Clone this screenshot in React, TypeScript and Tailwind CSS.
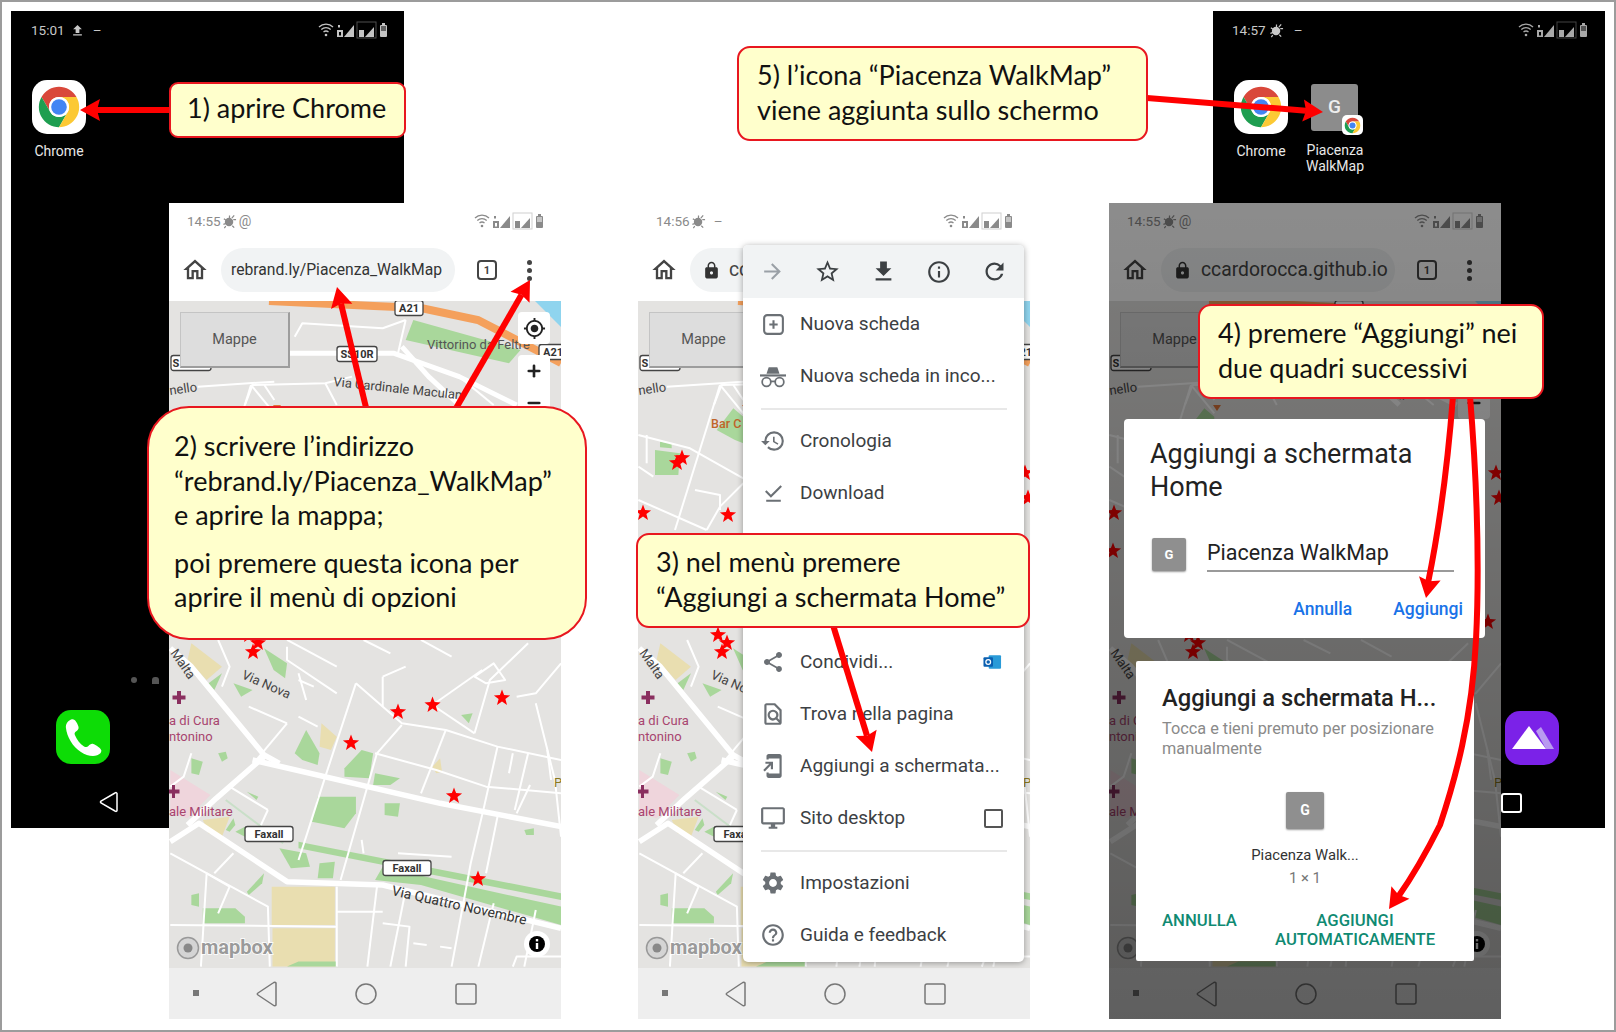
import React from "react";
import {
  MdOutlineHome, MdArrowForward, MdStarBorder, MdFileDownload, MdInfoOutline, MdRefresh,
  MdHistory, MdShare, MdOutlineFindInPage, MdOutlineAddToHomeScreen, MdOutlineDesktopWindows,
  MdSettings, MdHelpOutline, MdDownloadDone, MdLock, MdGpsFixed, MdFileUpload,
} from "react-icons/md";
import { Plus, Minus } from "lucide-react";

const Z1 = "translate(-169,-301) scale(.3827,.3333)";
const Z2 = "translate(-169,219) scale(.3827,.3333)";
const Z3 = "translate(-18,-101) scale(.3333)";

const GREEN = "#a9d79b";
const TAN = "#e9deb0";

const z2Green = [
  "770,700 800,630 835,700 830,735 790,720",
  "830,830 930,830 930,880 900,925 815,905",
  "900,745 945,690 975,700 965,775 900,770",
  "980,760 1045,775 1020,795 975,795",
  "1005,850 1045,850 1040,890 1005,885",
  "690,385 750,430 745,475 715,450",
  "610,490 660,510 630,530",
  "545,490 580,460 560,510",
  "500,715 530,725 520,765 500,760",
  "1205,585 1235,580 1225,610",
  "1370,930 1395,925 1395,945 1375,945",
  "835,1030 875,1025 870,1075 830,1075",
  "530,1165 615,1165 640,1190 640,1210 530,1210",
  "500,1125 520,1120 520,1160 500,1155",
  "730,985 800,1000 810,1040 760,1045",
  "780,965 1466,1120 1466,1140 780,985",
  "1000,1040 1130,1075 1466,1160 1466,1215 1100,1095 980,1080",
  "590,930 610,895 615,915 600,935",
  "615,935 640,920 640,950",
  "645,1115 690,1060 685,1090 650,1125",
  "570,700 590,695 595,715 580,725",
  "645,815 675,830 670,840",
  "750,1340 880,1340 880,1325 780,1325",
];
const z2Tan = [
  "710,1100 875,1100 875,1215 710,1215",
  "712,1225 875,1225 875,1340 712,1340",
  "500,370 580,440 540,480 490,420",
  "840,610 880,650 865,690 835,680",
  "530,900 600,890 580,950 545,940",
  "1130,740 1150,715 1155,755 1140,760",
];
const z2Wide = [
  "M445 385 L500 440 L690 705 L730 730",
  "M660 720 L1150 850 L1466 920",
  "M445 965 L520 910 L750 1085 L1000 1095 L1466 1225",
  "M690 710 L565 835 L490 915",
];
const z2Thin = [
  "M930 490 L850 770 L800 950 L780 1020",
  "M930 490 L1050 610 L1165 630 L1300 680 L1466 720",
  "M1000 470 L1000 560",
  "M1130 555 L1240 640",
  "M1130 555 L1260 450",
  "M1165 630 L1100 820",
  "M1050 615 L985 700 L890 1080",
  "M980 700 L1140 750 L1270 800 L1466 820",
  "M1300 680 L1265 860 L1230 1030 L1180 1340",
  "M1400 550 L1450 780 L1466 950",
  "M1380 700 L1345 870",
  "M1340 700 L1330 760",
  "M750 610 L670 720",
  "M650 560 L750 610",
  "M600 800 L700 870",
  "M700 870 L680 920",
  "M780 460 L800 540",
  "M780 480 L820 500",
  "M780 590 L830 620",
  "M500 700 L480 770 L445 800",
  "M1300 890 L1270 1060",
  "M540 1060 L525 1340",
  "M445 1000 L700 1160 L705 1340",
  "M540 1060 L600 1100 L570 1180",
  "M880 1100 L880 1340",
  "M880 1175 L1000 1175",
  "M880 1220 L445 1215",
  "M985 1100 L960 1340",
  "M1060 1110 L1020 1340",
  "M1000 1210 L1070 1220 L1060 1340",
  "M1290 1150 L1250 1340",
  "M1400 1170 L1370 1340",
  "M1340 1340 L1350 1310 L1466 1310",
  "M1080 1270 L1115 1275",
  "M1150 1280 L1180 1285",
  "M750 360 L880 440",
  "M950 360 L1020 400",
  "M1380 370 L1280 480 L1240 640",
  "M1466 430 L1400 520 L1350 530",
  "M1100 360 L1180 410",
  "M1240 470 L1290 430 L1320 480 L1270 490 Z",
  "M570 360 L600 440 L580 500",
  "M750 380 L750 420 L880 520",
  "M1000 470 L1060 440",
  "M1385 795 L1350 880",
  "M1430 690 L1440 780",
  "M945 960 L950 1000",
  "M610 1000 L560 1060",
  "M1040 1000 L1180 1010",
];
const z1Wide = ["M757 1060 L1030 1060 L1200 1130 L1350 1215", "M1050 1040 L1120 1130 L1200 1215"];
const z1Thin = [
  "M770 1010 L790 970 L1000 985 L1060 960",
  "M640 1215 L660 1155 L850 1150 L920 1130",
  "M850 1150 L880 1215",
  "M1060 960 L1040 1060",
  "M1200 1130 L1290 1215",
];
const z3Thin = [
  "M55 705 L210 745 L370 835",
  "M300 555 L165 990",
  "M55 800 L100 830",
  "M55 900 L260 990",
  "M260 990 L300 920 L370 850",
  "M225 870 L300 885 L300 930",
  "M140 560 L370 545",
  "M300 555 L370 640",
  "M340 555 L370 600",
  "M80 705 L80 790",
];

const STARS: [number, number][] = [
  [229, 411], [263.5, 404], [333, 397], [182, 442], [285, 495], [309, 578],
  [80, 334], [89, 342], [84, 351], [39, 162], [44, 157], [5, 212], [90, 214],
  [4, 250], [387, 172], [390, 197], [379, 321], [120, 300], [60, 290], [200, 320],
];

function starPoints(cx: number, cy: number, r = 8.5) {
  const pts: string[] = [];
  for (let i = 0; i < 10; i++) {
    const a = (Math.PI / 5) * i - Math.PI / 2;
    const rr = i % 2 === 0 ? r : r * 0.42;
    pts.push(`${(cx + rr * Math.cos(a)).toFixed(1)},${(cy + rr * Math.sin(a)).toFixed(1)}`);
  }
  return pts.join(" ");
}

function Shield({ x, y, w, label, tx }: { x: number; y: number; w: number; label: string; tx?: number }) {
  return (
    <g>
      <rect x={x - w / 2} y={y - 7.5} width={w} height={15} rx={2.5} fill="#fff" stroke="#444" strokeWidth={1.3} />
      <text x={tx ?? x} y={y + 4} fontSize={11} fontWeight={700} textAnchor="middle" fill="#333">{label}</text>
    </g>
  );
}

function MapArt() {
  return (
    <svg viewBox="0 0 392 667" className="block w-full h-full bg-[#e4e3e1] font-['Roboto',sans-serif]">
      <polygon points="366,0 392,0 392,26" fill="#8fd4ee" />
      <g transform={Z1}>
        <polygon points="1080,960 1360,1050 1330,1090 1060,1020" fill={GREEN} />
      </g>
      <path d="M100 0 L205 5 L252 7 L309 19 L367 49 L392 62" fill="none" stroke="#f4a05c" strokeWidth={8} />
      <g transform={Z2}>
        <polygon points="445,750 550,825 490,895 445,880" fill="#efd5dc" />
        {z2Tan.map((p) => <polygon key={p} points={p} fill={TAN} />)}
        {z2Green.map((p) => <polygon key={p} points={p} fill={GREEN} />)}
      </g>
      <g transform={Z3}>
        <polygon points="105,750 180,760 175,825 105,825" fill={GREEN} />
        <polygon points="120,725 155,730 155,745 120,742" fill={GREEN} />
        <polygon points="290,690 340,625 370,650 370,730 345,720" fill={GREEN} />
        <g fill="none" stroke="#fff" strokeWidth={2} strokeLinejoin="round">
          {z3Thin.map((d) => <path key={d} d={d} vectorEffect="non-scaling-stroke" />)}
        </g>
      </g>
      <g transform={Z2} fill="none" stroke="#fff" strokeLinejoin="round">
        {z2Thin.map((d) => <path key={d} d={d} strokeWidth={2} vectorEffect="non-scaling-stroke" />)}
        {z2Wide.map((d) => <path key={d} d={d} strokeWidth={5.5} vectorEffect="non-scaling-stroke" />)}
        <path d="M590 840 L740 970" stroke="#c9dfc8" strokeWidth={2} vectorEffect="non-scaling-stroke" />
      </g>
      <g transform={Z1} fill="none" stroke="#fff" strokeLinejoin="round">
        {z1Thin.map((d) => <path key={d} d={d} strokeWidth={2} vectorEffect="non-scaling-stroke" />)}
        {z1Wide.map((d) => <path key={d} d={d} strokeWidth={5} vectorEffect="non-scaling-stroke" />)}
      </g>

      <Shield x={240} y={7} w={28} label="A21" />
      <Shield x={384} y={51} w={28} label="A21" />
      <Shield x={188} y={53} w={40} label="SS10R" />
      <Shield x={22} y={62} w={40} label="S" tx={7} />
      <Shield x={100} y={533} w={48} label="Faxall" />
      <Shield x={238} y={567} w={48} label="Faxall" />

      <text x={258} y={48} fontSize={13} fill="#555">Vittorino da Feltre</text>
      <text x={0} y={0} fontSize={13} fill="#444" transform="translate(164,85) rotate(6)">Via Cardinale Maculani</text>
      <text x={0} y={0} fontSize={13} fill="#444" transform="translate(1,94) rotate(-8)">nello</text>
      <text x={0} y={0} fontSize={12.5} fill="#555" transform="translate(73,127)" fontWeight={500} className="fill-[#c0652a]">Bar C</text>
      <text x={0} y={0} fontSize={13} fill="#444" transform="translate(72,377) rotate(24)">Via Nova</text>
      <text x={0} y={0} fontSize={13} fill="#444" transform="translate(1,352) rotate(55)">Malta</text>
      <text x={0} y={0} fontSize={14} fill="#333" transform="translate(222,594) rotate(12.5)">Via Quattro Novembre</text>
      <text x={0} y={424} fontSize={13} fill="#a8456f">a di Cura</text>
      <text x={0} y={440} fontSize={13} fill="#a8456f">ntonino</text>
      <text x={0} y={515} fontSize={13} fill="#a8456f">ale Militare</text>
      <text x={385} y={486} fontSize={13} fill="#8a7a20">P</text>
      <path d="M12 403 h-4 v-4.500 h-4.500 v-4 h4.500 v-4.500 h4 v4.500 h4.500 v4 h-4.500 z" fill="#8a2f5f" />
      <path d="M6 497 h-3 v-4.500 h-3 v-4 h3 v-4.500 h3 v4.500 h4.500 v4 h-4.500 z" fill="#8a2f5f" />
      <polygon points="104,104 112,104 108,110" fill="#e0763a" />

      {STARS.map(([x, y]) => <polygon key={`${x}-${y}`} points={starPoints(x, y)} fill="#f00" />)}

      <circle cx={19} cy={647} r={10.500} fill="#d4d4d4" stroke="#999" strokeWidth={1.500} />
      <circle cx={19} cy={647} r={4.500} fill="#888" />
      <text x={32} y={653} fontSize={20} fontWeight={700} fill="#9a9a9a" stroke="#fff" strokeWidth={1.600} paintOrder="stroke">mapbox</text>
      <circle cx={368} cy={643} r={13} fill="#fff" />
      <circle cx={368} cy={643} r={8} fill="#000" />
      <rect x={366.800} y={642} width={2.400} height={6} fill="#fff" />
      <rect x={366.800} y={638} width={2.400} height={2.400} fill="#fff" />
    </svg>
  );
}

function MapPane() {
  return (
    <div className="relative flex-1 min-h-0 overflow-hidden">
      <MapArt />
      <div className="absolute left-[11px] top-[11px] w-[110px] h-[56px] bg-[#dddddd] border border-[#c4c4c4] border-r-2 border-b-2 border-r-[#9d9d9d] border-b-[#9d9d9d] flex items-center justify-center text-[14.5px] text-[#555]">
        Mappe
      </div>
      <div className="absolute left-[349px] top-[11px] w-[32px] h-[32px] bg-white rounded flex items-center justify-center text-[#222]">
        <MdGpsFixed size={23} />
      </div>
      <div className="absolute left-[349px] top-[54px] w-[32px] h-[64px] bg-white rounded flex flex-col items-center justify-around text-[#222]">
        <Plus size={18} strokeWidth={3.5} />
        <Minus size={18} strokeWidth={3.5} />
      </div>
    </div>
  );
}

function Bug({ className }: { className: string }) {
  return (
    <svg viewBox="0 0 16 16" className={className} fill="currentColor">
      <circle cx="7.500" cy="8.500" r="4.500" />
      <path d="M8 1.500v3M13 1.500l-2.500 3M15 6h-3M2 5l2 1.500M1.500 11l3-1M11 12.500l2 2M4 13l-1.500 2" stroke="currentColor" strokeWidth="1.300" />
    </svg>
  );
}

function StatusIcons({ fg, dim }: { fg: string; dim: string }) {
  return (
    <svg viewBox="0 0 70 18" className="w-[70px] h-[18px]" fill="none">
      <g stroke={fg} strokeWidth="1.300">
        <path d="M1 6 a10 10 0 0 1 14 0" />
        <path d="M3.300 8.500 a7 7 0 0 1 9.400 0" />
        <path d="M5.500 11 a4 4 0 0 1 5 0" />
      </g>
      <circle cx="8" cy="14" r="1.300" fill={fg} />
      <rect x="19" y="9" width="6" height="7" fill={fg} />
      <rect x="21" y="11" width="2" height="3.500" fill={dim} />
      <rect x="20" y="4" width="2" height="2.500" fill={fg} />
      <polygon points="26,16 36,4 36,16" fill={fg} />
      <rect x="39" y="1" width="19" height="16" stroke={fg} strokeOpacity=".4" />
      <rect x="41" y="9" width="5" height="7" fill={fg} />
      <polygon points="47,16 56,6 56,16" fill={fg} />
      <rect x="62" y="4" width="7" height="12" rx="1" fill={fg} />
      <rect x="64" y="2" width="3" height="2" fill={fg} />
      <rect x="63" y="5" width="5" height="5" fill={dim} fillOpacity=".5" />
    </svg>
  );
}

function StatusBar({ time, extra }: { time: string; extra: React.ReactNode }) {
  return (
    <div className="flex items-center justify-between h-[38px] pl-[18px] pr-[17px] pb-[2px] text-[13.5px] text-[#8a8a8a]">
      <div className="flex items-center gap-[1px]">
        <span>{time}</span>
        {extra}
      </div>
      <StatusIcons fg="#8a8a8a" dim="#fff" />
    </div>
  );
}

function TabCount() {
  return (
    <div className="ml-[22px] w-[20px] h-[20px] border-2 border-[#444] rounded-[4px] flex items-center justify-center text-[11px] font-bold text-[#444] leading-none">
      1
    </div>
  );
}

function Dots() {
  return (
    <div className="ml-[30px] flex flex-col gap-[3px]">
      <span className="block w-[5px] h-[5px] rounded-full bg-[#444]" />
      <span className="block w-[5px] h-[5px] rounded-full bg-[#444]" />
      <span className="block w-[5px] h-[5px] rounded-full bg-[#444]" />
    </div>
  );
}

function Toolbar({ children }: { children: React.ReactNode }) {
  return (
    <div className="flex items-center h-[60px] pb-[2px] pl-[12px] text-[#444]">
      <MdOutlineHome size={28} />
      <div className="ml-[12px] w-[234px] h-[44px] rounded-full bg-[#f1f3f4] flex items-center overflow-hidden">
        {children}
      </div>
      <TabCount />
      <Dots />
    </div>
  );
}

function NavBar() {
  return (
    <div className="h-[51px] bg-[#eeeeee] shrink-0">
      <svg viewBox="0 0 392 51" className="block w-full h-full" fill="none" stroke="#777" strokeWidth="1.500">
        <rect x="24" y="22" width="6" height="6" fill="#777" stroke="none" />
        <path d="M107 15 L107 37 Q106 38.500 104 37 L89 27 Q87.500 26 89 25 L104 15 Q106 13.500 107 15 Z" />
        <circle cx="197" cy="26" r="10" />
        <rect x="287" y="16" width="20" height="20" rx="2" />
      </svg>
    </div>
  );
}

function ChromeLogo({ className }: { className: string }) {
  return (
    <svg viewBox="0 0 48 48" className={className}>
      <path d="M43.050 13 A22 22 0 0 0 4.950 13 L14.500 29.500 A11 11 0 0 1 24 13 Z" fill="#d9483b" />
      <path d="M4.950 13 A22 22 0 0 0 24 46 L33.500 29.500 A11 11 0 0 1 14.500 29.500 Z" fill="#1e9e50" />
      <path d="M24 46 A22 22 0 0 0 43.050 13 L24 13 A11 11 0 0 1 33.500 29.500 Z" fill="#fcc934" />
      <circle cx="24" cy="24" r="11" fill="#fff" />
      <circle cx="24" cy="24" r="8.500" fill="#4285f4" />
    </svg>
  );
}

function ChromeApp({ className }: { className: string }) {
  return (
    <div className={`absolute flex flex-col items-center w-[54px] ${className}`}>
      <div className="w-[54px] h-[54px] rounded-[15px] bg-white flex items-center justify-center">
        <ChromeLogo className="w-[44px] h-[44px]" />
      </div>
      <span className="mt-[8px] text-[14px] leading-[18px] text-[#e8e8e8] whitespace-nowrap">Chrome</span>
    </div>
  );
}

function GTile({ className, text }: { className: string; text: string }) {
  return (
    <div className={`bg-[#8f8f8f] rounded-[2px] flex items-center justify-center text-white font-bold ${text} ${className}`}>
      G
    </div>
  );
}

function Item({ icon, label, right }: { icon: React.ReactNode; label: string; right?: React.ReactNode }) {
  return (
    <div className="flex items-center h-[52px] pl-[17px] pr-[21px] text-[19px] text-[#3c4043]">
      <span className="w-[26px] h-[26px] flex items-center justify-center text-[#6b7075]">{icon}</span>
      <span className="ml-[14px] flex-1 whitespace-nowrap">{label}</span>
      {right}
    </div>
  );
}

function Sep() {
  return (
    <div className="h-[13px] flex items-center pl-[18px]">
      <div className="w-[246px] h-[2px] bg-[#e8e8e8]" />
    </div>
  );
}

function ChromeMenu() {
  return (
    <div className="absolute left-[105px] top-[42px] w-[281px] h-[717px] bg-white rounded-[5px] shadow-[0_1px_6px_rgba(0,0,0,0.35)] overflow-hidden">
      <div className="h-[53px] bg-[#f1f3f4] flex items-center justify-around px-[2px] text-[#3c4043]">
        <MdArrowForward size={25} className="text-[#9aa0a6]" />
        <MdStarBorder size={27} />
        <MdFileDownload size={27} />
        <MdInfoOutline size={26} />
        <MdRefresh size={27} />
      </div>
      <Item
        icon={
          <svg viewBox="0 0 24 24" className="w-[25px] h-[25px]" fill="none" stroke="currentColor" strokeWidth="2">
            <rect x="3" y="3" width="18" height="18" rx="3" />
            <path d="M12 8v8M8 12h8" />
          </svg>
        }
        label="Nuova scheda"
      />
      <Item
        icon={
          <svg viewBox="0 0 24 24" className="w-[26px] h-[26px]" fill="none" stroke="currentColor" strokeWidth="1.600">
            <path d="M6 10 L8 4 H16 L18 10 Z" fill="currentColor" stroke="none" />
            <path d="M0 11.500 H24" strokeWidth="2" />
            <circle cx="6" cy="17.500" r="4" />
            <circle cx="18" cy="17.500" r="4" />
            <path d="M10 17 H14" />
          </svg>
        }
        label="Nuova scheda in inco..."
      />
      <Sep />
      <Item icon={<MdHistory size={26} />} label="Cronologia" />
      <Item icon={<MdDownloadDone size={25} />} label="Download" />
      <div className="h-[117px]" />
      <Item
        icon={<MdShare size={24} />}
        label="Condividi..."
        right={
          <svg viewBox="0 0 20 16" className="w-[19px] h-[16px] mr-[1px]">
            <rect x="6" y="1" width="13" height="14" rx="1" fill="#2a9bd8" />
            <rect x="0.500" y="3" width="10" height="10" rx="1" fill="#0a5fb0" />
            <circle cx="5.500" cy="8" r="2.500" fill="none" stroke="#fff" strokeWidth="1.300" />
          </svg>
        }
      />
      <Item icon={<MdOutlineFindInPage size={26} />} label="Trova nella pagina" />
      <Item icon={<MdOutlineAddToHomeScreen size={26} />} label="Aggiungi a schermata..." />
      <Item
        icon={<MdOutlineDesktopWindows size={28} />}
        label="Sito desktop"
        right={<span className="block w-[19px] h-[19px] border-2 border-[#555] rounded-[2px]" />}
      />
      <Sep />
      <Item icon={<MdSettings size={26} />} label="Impostazioni" />
      <Item icon={<MdHelpOutline size={26} />} label="Guida e feedback" />
    </div>
  );
}

function AddDialogs() {
  return (
    <>
      <div className="absolute left-[15px] top-[216px] w-[361px] h-[219px] bg-white rounded-[4px] pt-[19px] pl-[26px] pr-[22px] text-[#222]">
        <div className="text-[27px] leading-[33px]">
          Aggiungi a schermata
          <br />
          Home
        </div>
        <div className="flex mt-[34px] ml-[2px]">
          <GTile className="w-[34px] h-[33px] shadow-[0_1px_2px_rgba(0,0,0,0.4)]" text="text-[13px]" />
          <div className="ml-[21px] w-[247px] h-[34px] border-b-2 border-[#9a9a9a] text-[21.5px] leading-[30px]">Piacenza WalkMap</div>
        </div>
        <div className="flex justify-end gap-[41px] mt-[25px] text-[17.500px] leading-[24px] font-medium text-[#1a73e8]">
          <span>Annulla</span>
          <span>Aggiungi</span>
        </div>
      </div>
      <div className="absolute left-[27px] top-[458px] w-[338px] h-[300px] bg-white rounded-[2px] pt-[23px] pl-[26px]">
        <div className="text-[23.700px] leading-[28px] font-medium text-[#222] whitespace-nowrap">Aggiungi a schermata H...</div>
        <div className="mt-[7px] text-[16.300px] leading-[19.500px] text-[#8a8a8a] whitespace-nowrap">
          Tocca e tieni premuto per posizionare
          <br />
          manualmente
        </div>
        <div className="ml-[124px] mt-[34px] w-[38px]">
          <GTile className="w-[38px] h-[37px] shadow-[0_1px_2px_rgba(0,0,0,0.4)]" text="text-[14px]" />
        </div>
        <div className="w-[286px] mt-[15px] text-center text-[14.800px] leading-[23px] text-[#333]">
          Piacenza Walk...
          <div className="text-[#777]">1 × 1</div>
        </div>
        <div className="flex mt-[21px] text-[16.700px] leading-[19px] font-medium text-[#0f8a72]">
          <span className="w-[75px]">ANNULLA</span>
          <span className="ml-[38px] w-[160px] text-center whitespace-nowrap">
            AGGIUNGI
            <br />
            AUTOMATICAMENTE
          </span>
        </div>
      </div>
    </>
  );
}

function Arrow({ d, from, tip }: { d?: string; from: [number, number]; tip: [number, number] }) {
  const a = Math.atan2(tip[1] - from[1], tip[0] - from[0]);
  const L = 20;
  const W = 11;
  const bx = tip[0] - L * Math.cos(a);
  const by = tip[1] - L * Math.sin(a);
  const nx = -Math.sin(a);
  const ny = Math.cos(a);
  const nbx = tip[0] - (L - 3) * Math.cos(a);
  const nby = tip[1] - (L - 3) * Math.sin(a);
  const pts = [
    `${tip[0]},${tip[1]}`,
    `${bx + nx * W},${by + ny * W}`,
    `${nbx},${nby}`,
    `${bx - nx * W},${by - ny * W}`,
  ].join(" ");
  const path = d ?? `M${from[0]} ${from[1]} L${nbx} ${nby}`;
  return (
    <g>
      <path d={path} fill="none" stroke="#ff0000" strokeWidth={6} />
      <polygon points={pts} fill="#ff0000" />
    </g>
  );
}

function Callout({ className, lines }: { className: string; lines: string[] }) {
  return (
    <div className={`absolute bg-[#ffffcc] border-2 border-[#e8171f] flex flex-col font-['Lato',sans-serif] text-[27px] leading-[34.500px] text-[#111] whitespace-nowrap ${className}`}>
      {lines.map((l, i) => (
        <span key={i} className={l === "poi premere questa icona per" ? "mt-[13px]" : ""}>{l}</span>
      ))}
    </div>
  );
}

export default function App() {
  return (
    <div className="relative w-[1616px] h-[1032px] bg-white border-2 border-[#9c9c9c] box-border overflow-hidden font-['Roboto',sans-serif]">
      {/* offsets inside are relative to the 2px frame */}
      <div className="absolute left-[-2px] top-[-2px] w-[1616px] h-[1032px]">
        {/* left home screen */}
        <div className="absolute left-[11px] top-[11px] w-[393px] h-[817px] bg-black">
          <div className="flex items-center gap-[5px] h-[38px] pl-[20px] text-[13.500px] text-[#c8c8c8]">
            <span>15:01</span>
            <MdFileUpload size={15} />
            <span className="ml-[3px]">–</span>
          </div>
          <div className="absolute right-[16px] top-[10px]">
            <StatusIcons fg="#c4c4c4" dim="#000" />
          </div>
        </div>
        <ChromeApp className="left-[32px] top-[80px]" />
        <div className="absolute left-[131px] top-[677px] w-[6px] h-[6px] rounded-full bg-[#555]" />
        <div className="absolute left-[152px] top-[677px] w-[7px] h-[7px] rounded-t-[3px] bg-[#555]" />
        <div className="absolute left-[56px] top-[710px] w-[54px] h-[54px] rounded-[15px] bg-[#0ddc06] flex items-center justify-center">
          <svg viewBox="0 0 24 24" className="w-[50px] h-[50px]" fill="#fff">
            <path d="M6.600 3.500 C5 4 3.600 5.600 3.800 7.500 C4.300 12 7 16.500 11 19.200 C13.500 20.900 16.500 21.500 18.800 20.800 C20.200 20.300 20.900 19.400 20.800 18.400 C20.700 17.500 18.400 15.800 17 15.300 C16 15 15.300 15.500 14.600 16.300 C14 17 13.300 17 12.500 16.500 C10.500 15.200 9 13.200 8.100 11 C7.800 10.200 8 9.700 8.800 9.200 C9.700 8.600 10.100 8 9.800 7 C9.400 5.500 8.100 3 6.600 3.500 Z" />
          </svg>
        </div>
        <svg viewBox="0 0 20 22" className="absolute left-[99px] top-[791px] w-[20px] h-[22px]" fill="none" stroke="#fff" strokeWidth="1.500">
          <path d="M18 2.500 V19.500 Q17.500 21 16 20 L2 12 Q1 11 2 10 L16 2 Q17.500 1 18 2.500 Z" />
        </svg>

        {/* right home screen */}
        <div className="absolute left-[1213px] top-[11px] w-[392px] h-[817px] bg-black">
          <div className="flex items-center gap-[3px] h-[38px] pl-[19px] text-[13.500px] text-[#c8c8c8]">
            <span>14:57</span>
            <Bug className="w-[15px] h-[15px]" />
            <span className="ml-[7px]">–</span>
          </div>
          <div className="absolute right-[17px] top-[10px]">
            <StatusIcons fg="#a8a8a8" dim="#000" />
          </div>
        </div>
        <ChromeApp className="left-[1234px] top-[80px]" />
        <div className="absolute left-[1311px] top-[84px] w-[47px] h-[47px] bg-[#8c8c8c] rounded-[3px] flex items-center justify-center text-[#eeeeee] text-[19px] font-medium">
          G
          <div className="absolute left-[31px] top-[31px] w-[21px] h-[20px] rounded-[5px] bg-white flex items-center justify-center">
            <ChromeLogo className="w-[17px] h-[17px]" />
          </div>
        </div>
        <div className="absolute left-[1295px] top-[142px] w-[80px] text-center text-[14px] leading-[16px] text-[#e8e8e8]">
          Piacenza
          <br />
          WalkMap
        </div>
        <div className="absolute left-[1505px] top-[711px] w-[54px] h-[54px] rounded-[15px] bg-[#7b22e8] flex items-center justify-center">
          <svg viewBox="0 0 44 30" className="w-[44px] h-[30px]">
            <polygon points="26,8 31,4 44,26 36,26" fill="#b99af0" />
            <polygon points="2,26 19,3 36,26" fill="#fff" />
          </svg>
        </div>
        <div className="absolute left-[1501px] top-[793px] w-[21px] h-[20px] border-2 border-white rounded-[3px]" />

        {/* phone 1 */}
        <div className="absolute left-[169px] top-[203px] w-[392px] h-[816px] bg-white flex flex-col">
          <StatusBar time="14:55" extra={<><Bug className="w-[15px] h-[15px]" /><span className="ml-[1px] text-[14px]">@</span></>} />
          <Toolbar>
            <span className="ml-[10px] text-[15.700px] text-[#333] whitespace-nowrap">rebrand.ly/Piacenza_WalkMap</span>
          </Toolbar>
          <MapPane />
          <NavBar />
        </div>

        {/* phone 2 */}
        <div className="absolute left-[638px] top-[203px] w-[392px] h-[816px] bg-white flex flex-col">
          <StatusBar time="14:56" extra={<><Bug className="w-[15px] h-[15px]" /><span className="ml-[7px]">–</span></>} />
          <Toolbar>
            <MdLock size={19} className="ml-[12px] text-[#333]" />
            <span className="ml-[8px] text-[19.300px] text-[#444] whitespace-nowrap">ccardorocca.github.io</span>
          </Toolbar>
          <MapPane />
          <NavBar />
          <ChromeMenu />
        </div>

        {/* phone 3 */}
        <div className="absolute left-[1109px] top-[203px] w-[392px] h-[816px] bg-white flex flex-col">
          <StatusBar time="14:55" extra={<><Bug className="w-[15px] h-[15px]" /><span className="ml-[1px] text-[14px]">@</span></>} />
          <Toolbar>
            <MdLock size={19} className="ml-[12px] text-[#333]" />
            <span className="ml-[9px] text-[19.300px] text-[#444] whitespace-nowrap">ccardorocca.github.io</span>
          </Toolbar>
          <MapPane />
          <NavBar />
          <div className="absolute inset-0 bg-linear-to-b from-black/45 to-black/60" />
          <AddDialogs />
        </div>

        {/* arrows */}
        <svg viewBox="0 0 1616 1032" className="absolute left-0 top-0 w-[1616px] h-[1032px] pointer-events-none">
          <Arrow from={[169, 110]} tip={[80, 110]} />
          <Arrow from={[366.600, 410]} tip={[337, 287]} />
          <Arrow from={[455, 410]} tip={[530, 280]} />
          <Arrow from={[833, 625]} tip={[872, 752]} />
          <Arrow from={[1445, 500]} tip={[1426, 598]} d="M1453 396 Q1445 500 1428 583" />
          <Arrow
            from={[1430, 850]}
            tip={[1389, 909]}
            d="M1470 396 C1476 470 1480 560 1476 640 C1472 720 1455 780 1440 825 C1425 855 1410 880 1398 897"
          />
          <Arrow from={[1147, 98]} tip={[1323, 112]} />
        </svg>

        {/* callouts */}
        <Callout className="left-[169px] top-[82px] w-[237px] h-[56px] rounded-[9px] pl-[16px] pt-[7px]" lines={["1) aprire Chrome"]} />
        <Callout
          className="left-[147px] top-[406px] w-[440px] h-[234px] rounded-[42px] pl-[25px] pt-[21px]"
          lines={[
            "2) scrivere l’indirizzo",
            "“rebrand.ly/Piacenza_WalkMap”",
            "e aprire la mappa;",
            "poi premere questa icona per",
            "aprire il menù di opzioni",
          ]}
        />
        <Callout className="left-[636px] top-[533px] w-[394px] h-[95px] rounded-[13px] pl-[18px] pt-[10px]" lines={["3) nel menù premere", "“Aggiungi a schermata Home”"]} />
        <Callout className="left-[1198px] top-[304px] w-[346px] h-[95px] rounded-[13px] pl-[18px] pt-[10px]" lines={["4) premere “Aggiungi” nei", "due quadri successivi"]} />
        <Callout className="left-[737px] top-[46px] w-[411px] h-[95px] rounded-[13px] pl-[18px] pt-[10px]" lines={["5) l’icona “Piacenza WalkMap”", "viene aggiunta sullo schermo"]} />
      </div>
    </div>
  );
}
